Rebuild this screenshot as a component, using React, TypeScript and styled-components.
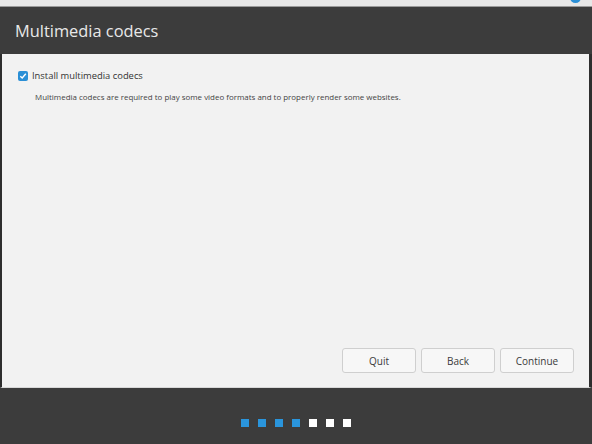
import React from "react";
import styled, { createGlobalStyle } from "styled-components";

const Global = createGlobalStyle`
  html, body { margin: 0; padding: 0; background: #3c3c3c; }
  body { font-family: "Open Sans", "Noto Sans", sans-serif; }
`;

const Window = styled.div`
  width: 592px;
  height: 444px;
  display: flex;
  flex-direction: column;
  background: #3c3c3c;
  overflow: hidden;
`;

const TopStrip = styled.div`
  position: relative;
  height: 6px;
  background: #e7e7e7;
  border-bottom: 1px solid #9a9a9a;
  flex: none;
`;

const Bubble = styled.div`
  position: absolute;
  right: 11px;
  top: -8px;
  width: 11px;
  height: 11px;
  border-radius: 50%;
  background: #2a8fd6;
`;

const Header = styled.div`
  height: 47px;
  flex: none;
  display: flex;
  align-items: center;
  padding-left: 15px;
  background: #3c3c3c;
`;

const Title = styled.h1`
  margin: 0;
  font-family: "Open Sans", sans-serif;
  font-weight: 400;
  font-size: 16.4px;
  color: #e8e8e8;
`;

const Content = styled.div`
  flex: 1;
  display: flex;
  flex-direction: column;
  background: #f2f2f2;
  border-left: 2px solid #2e2e2e;
  border-right: 3px solid #2e2e2e;
  border-bottom: 1px solid #d8d8d8;
  padding: 15px 15px 14px 16px;
`;

const CheckRow = styled.label`
  display: flex;
  align-items: center;
  gap: 4px;
  font-size: 9.4px;
  color: #333;
`;

const Box = styled.span`
  width: 10px;
  height: 10px;
  border-radius: 2px;
  background: #2a8fd6;
  display: flex;
  align-items: center;
  justify-content: center;
`;

const Desc = styled.p`
  margin: 10px 0 0 17px;
  font-size: 7.95px;
  color: #444;
`;

const Spacer = styled.div`
  flex: 1;
`;

const Buttons = styled.div`
  display: flex;
  justify-content: flex-end;
  gap: 5px;
`;

const Button = styled.button`
  width: 74px;
  height: 25px;
  background: #f7f7f7;
  border: 1px solid #cfcfcf;
  border-radius: 3px;
  font-family: "Open Sans", sans-serif;
  font-size: 10px;
  color: #3a3a3a;
  padding: 0;
`;

const Footer = styled.div`
  height: 56px;
  flex: none;
  display: flex;
  align-items: center;
  justify-content: center;
  gap: 9px;
  background: #3c3c3c;
  padding-top: 14px;
  box-sizing: border-box;
`;

const Dot = styled.span<{ $active: boolean }>`
  width: 8px;
  height: 8px;
  background: ${(p) => (p.$active ? "#2a95dc" : "#ffffff")};
`;

export default function App() {
  const steps = [true, true, true, true, false, false, false];
  return (
    <>
      <Global />
      <Window>
        <TopStrip>
          <Bubble />
        </TopStrip>
        <Header>
          <Title>Multimedia codecs</Title>
        </Header>
        <Content>
          <CheckRow>
            <Box>
              <svg width="8" height="8" viewBox="0 0 8 8">
                <path d="M1.3 4.2 L3.2 6 L6.8 1.8" fill="none" stroke="#fff" strokeWidth="1.4" />
              </svg>
            </Box>
            Install multimedia codecs
          </CheckRow>
          <Desc>
            Multimedia codecs are required to play some video formats and to properly render some websites.
          </Desc>
          <Spacer />
          <Buttons>
            <Button>Quit</Button>
            <Button>Back</Button>
            <Button>Continue</Button>
          </Buttons>
        </Content>
        <Footer>
          {steps.map((a, i) => (
            <Dot key={i} $active={a} />
          ))}
        </Footer>
      </Window>
    </>
  );
}
